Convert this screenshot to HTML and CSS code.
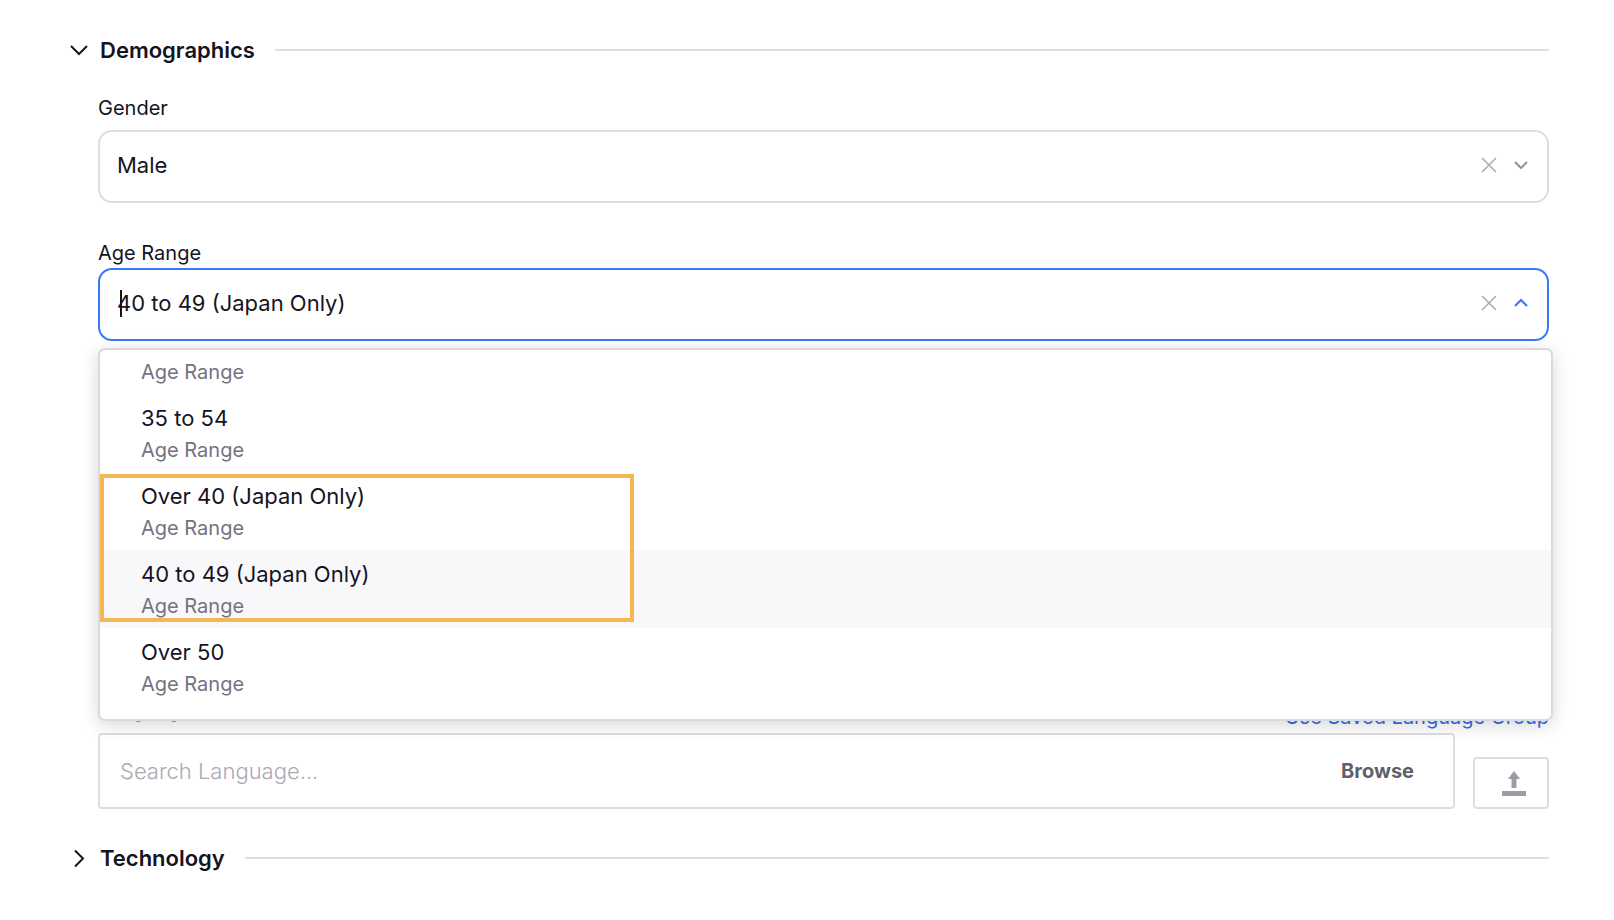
FILE: index.html
```html
<!DOCTYPE html>
<html lang="en">
<head>
<meta charset="utf-8">
<title>Audience targeting</title>
<link rel="stylesheet" href="styles.css">
</head>
<body>
<main class="page">
  <section>
    <h2 class="section-head">
      <button class="section-toggle" type="button" aria-expanded="true">
        <svg class="section-icon" viewBox="0 0 20 20" aria-hidden="true"><path d="M2 6l8 8 8-8"/></svg>
        <span>Demographics</span>
      </button>
      <span class="rule"></span>
    </h2>

    <div class="fields">
      <div class="field">
        <label class="label" for="gender">Gender</label>
        <div class="control">
          <select class="value" id="gender"><option>Male</option></select>
          <button class="icon-button" type="button" aria-label="Clear gender">
            <svg class="icon clear" viewBox="0 0 16 16"><path d="M1 1l14 14M15 1L1 15"/></svg>
          </button>
          <svg class="icon chevron" viewBox="0 0 16 16" aria-hidden="true"><path d="M2 5l6 6 6-6"/></svg>
        </div>
      </div>

      <div class="field field-age">
        <label class="label" for="age">Age Range</label>
        <div class="control is-open">
          <input class="value" id="age" type="text" role="combobox" aria-expanded="true" aria-controls="age-menu" value="40 to 49 (Japan Only)">
          <span class="caret"></span>
          <button class="icon-button" type="button" aria-label="Clear age range">
            <svg class="icon clear" viewBox="0 0 16 16"><path d="M1 1l14 14M15 1L1 15"/></svg>
          </button>
          <svg class="icon chevron" viewBox="0 0 16 16" aria-hidden="true"><path d="M2 11l6-6 6 6"/></svg>
        </div>
        <div class="menu">
          <ul class="options" id="age-menu" role="listbox" aria-label="Age Range">
            <li class="option" role="option"><span class="option-type">Age Range</span></li>
            <li class="option" role="option"><span class="option-name">35 to 54</span><span class="option-type">Age Range</span></li>
            <li class="option" role="option"><span class="option-name">Over 40 (Japan Only)</span><span class="option-type">Age Range</span></li>
            <li class="option is-active" role="option" aria-selected="true"><span class="option-name">40 to 49 (Japan Only)</span><span class="option-type">Age Range</span></li>
            <li class="option" role="option"><span class="option-name">Over 50</span><span class="option-type">Age Range</span></li>
          </ul>
          <div class="highlight"></div>
        </div>
      </div>

      <div class="field field-language">
        <div class="label-row">
          <label class="label" for="language">Language</label>
          <a class="link" href="#">Use Saved Language Group</a>
        </div>
        <div class="language-row">
          <div class="search">
            <input class="search-input" id="language" type="text" placeholder="Search Language...">
            <button class="browse" type="button">Browse</button>
          </div>
          <button class="upload" type="button" aria-label="Upload languages">
            <svg class="upload-icon" viewBox="0 0 24 25"><path d="M12 0l6 8h-3.500v9h-5V8H6zM0 20h24v5H0z"/></svg>
          </button>
        </div>
      </div>
    </div>
  </section>

  <section>
    <h2 class="section-head">
      <button class="section-toggle" type="button" aria-expanded="false">
        <svg class="section-icon" viewBox="0 0 20 20" aria-hidden="true"><path d="M6 2.500l8 8-8 8"/></svg>
        <span>Technology</span>
      </button>
      <span class="rule"></span>
    </h2>
  </section>
</main>
</body>
</html>
```

FILE: styles.css
```css
* { box-sizing: border-box; }

body {
  margin: 0;
  background: #fff;
  color: #14141f;
  font-family: Inter, "Liberation Sans", sans-serif;
  font-size: 22px;
}

button, input, select {
  margin: 0;
  padding: 0;
  border: 0;
  background: none;
  color: inherit;
  font: inherit;
}

.page { padding: 34px 65px 32px 69px; }

.section-head {
  display: flex;
  align-items: center;
  gap: 20px;
  margin: 0;
  font-size: 22px;
  line-height: 32px;
}

.section-toggle {
  display: flex;
  align-items: center;
  gap: 11px;
  font-weight: 600;
}

.section-icon {
  width: 20px;
  height: 20px;
  fill: none;
  stroke: #14141f;
  stroke-width: 2;
}

.rule {
  flex: 1;
  height: 2px;
  background: #dedede;
}

.fields { padding: 30px 0 33px 29px; }

.field { position: relative; }
.field-age { margin-top: 38px; }
.field-language { margin-top: 357px; }

.label {
  display: block;
  font-size: 20px;
  line-height: 24px;
}

.control {
  position: relative;
  display: flex;
  align-items: center;
  gap: 16px;
  height: 73px;
  margin-top: 10px;
  padding: 0 18px 3px 17px;
  border: 2px solid #dedede;
  border-radius: 14px;
}

.field-age .control { margin-top: 3px; }
.control.is-open { border-color: #3b78f5; }

.value {
  flex: 1;
  min-width: 0;
  height: 100%;
  appearance: none;
  outline: none;
}

.caret {
  position: absolute;
  left: 20px;
  top: 20px;
  width: 2px;
  height: 27px;
  background: #14141f;
}

.icon-button { display: flex; }

.icon {
  width: 16px;
  height: 16px;
  fill: none;
}

.clear { stroke: #aaaaaf; stroke-width: 1.500; }
.chevron { stroke: #9696a0; stroke-width: 2.200; }
.is-open .chevron { stroke: #3b78f5; }

.menu {
  position: absolute;
  z-index: 2;
  top: calc(100% + 7px);
  left: 0;
  right: -4px;
  padding-bottom: 13px;
  border: 2px solid #d9d9e0;
  border-radius: 7px;
  background: #fff;
  box-shadow: 0 4px 18px rgba(0, 0, 0, 0.16);
}

.options {
  margin: 0;
  padding: 0;
  list-style: none;
}

.option {
  display: flex;
  flex-direction: column;
  gap: 6px;
  padding: 10px 41px;
}

.option.is-active { background: #f8f8fa; }
.option-name { line-height: 28px; }

.option-type {
  color: #73737f;
  font-size: 20px;
  line-height: 24px;
}

.highlight {
  position: absolute;
  top: 124px;
  left: 0;
  width: 534px;
  height: 148px;
  border: 4px solid #f5b654;
}

.label-row {
  display: flex;
  align-items: flex-start;
  justify-content: space-between;
  min-height: 35px;
}

.link {
  align-self: flex-end;
  color: #2f6bf0;
  font-size: 20px;
  line-height: 32px;
  text-decoration: none;
}

.language-row {
  display: flex;
  align-items: flex-end;
  gap: 18px;
}

.search {
  display: flex;
  flex: 1;
  height: 76px;
  padding: 0 39px 0 20px;
  border: 2px solid #dedede;
  border-radius: 4px;
}

.search-input {
  flex: 1;
  min-width: 0;
  outline: none;
}

.search-input::placeholder { color: #aaaab0; font-weight: 300; opacity: 1; }

.browse {
  color: #5f5f6c;
  font-size: 20px;
  font-weight: 700;
}

.upload {
  display: flex;
  align-items: center;
  justify-content: center;
  width: 76px;
  height: 52px;
  padding-left: 6px;
  border: 2px solid #dedede;
  border-radius: 4px;
}

.upload-icon {
  width: 24px;
  height: 25px;
  fill: #9c9ca6;
}
```
